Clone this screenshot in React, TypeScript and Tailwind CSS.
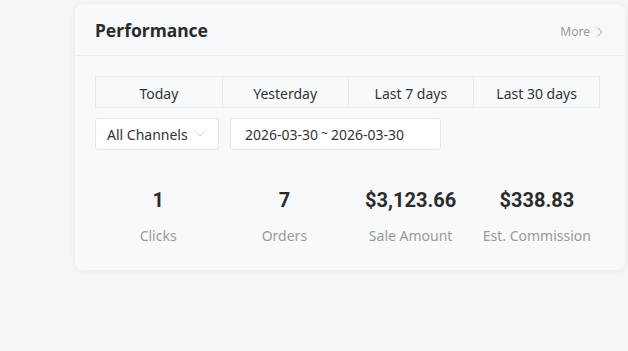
import { ChevronRight, ChevronDown } from 'lucide-react';

const tabs = ['Today', 'Yesterday', 'Last 7 days', 'Last 30 days'];

const stats = [
  { value: '1', label: 'Clicks' },
  { value: '7', label: 'Orders' },
  { value: '$3,123.66', label: 'Sale Amount' },
  { value: '$338.83', label: 'Est. Commission' },
];

export default function App() {
  return (
    <div className="h-[351px] w-[628px] bg-[#f5f6f8] pt-[4px] pl-[75px]" style={{ fontFamily: "'Noto Sans', 'Open Sans', sans-serif" }}>
      <div className="w-[550px] h-[266px] bg-[#f8f9fb] rounded-lg shadow-[0_1px_6px_rgba(0,0,0,0.06)]">
        {/* Header */}
        <div className="h-[52px] flex items-center justify-between pl-5 pr-[17px] border-b border-[#ebedf0]">
          <h2 className="text-[17.5px] font-bold text-[#2b2b2b] mt-[2px]">Performance</h2>
          <a className="flex items-center text-[12px] text-[#9a9a9a] gap-[2px] mt-[4px]">
            More
            <ChevronRight className="w-4 h-4" strokeWidth={1.4} />
          </a>
        </div>

        <div className="pl-5 pr-[25px] pt-[20px]">
          {/* Tabs */}
          <div className="grid grid-cols-4 border border-[#e8e9ec] h-[32px]">
            {tabs.map((t, i) => (
              <div
                key={t}
                className={`flex items-center justify-center text-[14px] text-[#333] pt-[2px] ${i > 0 ? 'border-l border-[#e8e9ec]' : ''}`}
              >
                {t}
              </div>
            ))}
          </div>

          {/* Filters */}
          <div className="flex gap-[11px] mt-[10px]">
            <div className="w-[124px] h-[32px] bg-white border border-[#e5e6ea] rounded-[3px] flex items-center justify-between pl-[11px] pr-[10px] text-[14px] text-[#333]">
              All Channels
              <ChevronDown className="w-4 h-4 text-[#c0c0c0]" strokeWidth={1.3} />
            </div>
            <div className="w-[211px] h-[32px] bg-white border border-[#e5e6ea] rounded-[3px] flex items-center pl-[14px] text-[14px] text-[#333]">
              2026-03-30 <span className="mx-[3px] text-[12px]">~</span> 2026-03-30
            </div>
          </div>

          {/* Stats */}
          <div className="grid grid-cols-4 mt-[36px]">
            {stats.map((s) => (
              <div key={s.label} className="flex flex-col items-center">
                <div className="text-[20px] font-bold text-[#2b2b2b] leading-[28px]" style={{ fontFamily: 'Roboto, sans-serif' }}>
                  {s.value}
                </div>
                <div className="text-[14px] text-[#999] mt-[11px]">{s.label}</div>
              </div>
            ))}
          </div>
        </div>
      </div>
    </div>
  );
}
